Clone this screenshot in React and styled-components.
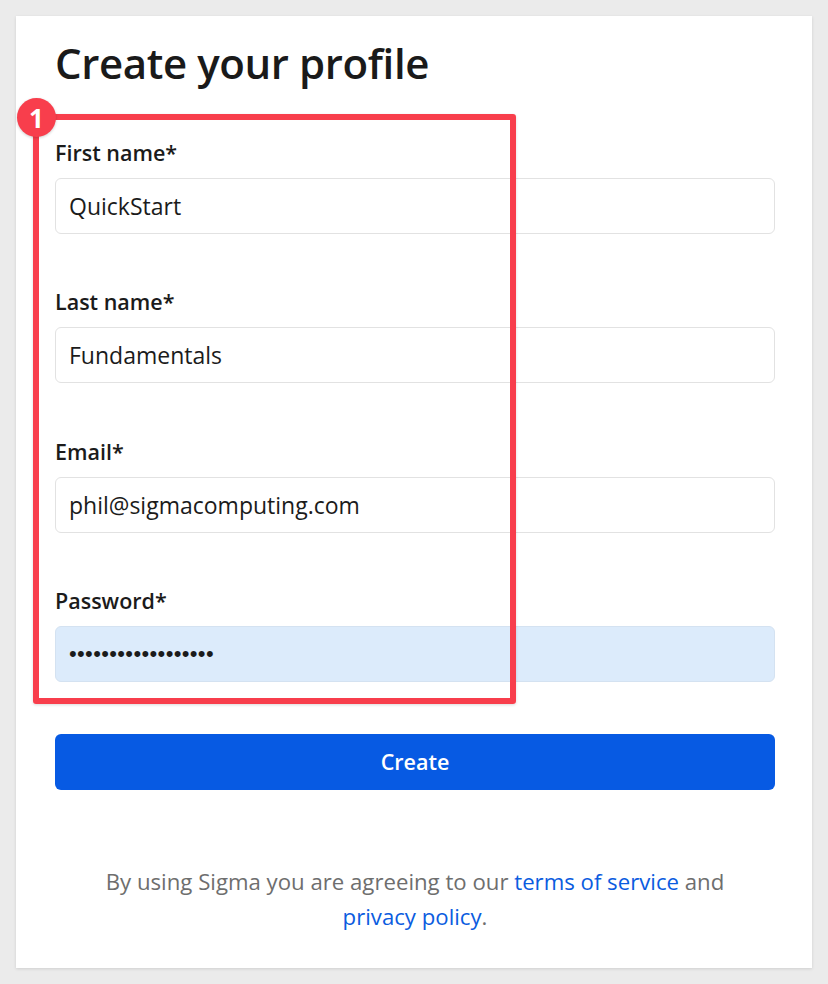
import React from 'react'
import styled, { createGlobalStyle } from 'styled-components'

const GlobalStyle = createGlobalStyle`
  html, body {
    margin: 0;
    background: #ebebeb;
  }
  body {
    font-family: "Open Sans", "Noto Sans", sans-serif;
    color: #1b1b1b;
  }
`

const fields = [
  { label: 'First name*', value: 'QuickStart' },
  { label: 'Last name*', value: 'Fundamentals' },
  { label: 'Email*', value: 'phil@sigmacomputing.com' },
  { label: 'Password*', value: '••••••••••••••••••', secret: true },
]

const App = () => {
  return (
    <>
      <GlobalStyle />
      <Page>
        <Card>
          <Title>Create your profile</Title>
          <Form>
            {fields.map((f) => (
              <Field key={f.label}>
                <Label>{f.label}</Label>
                <Input secret={f.secret}>{f.value}</Input>
              </Field>
            ))}
          </Form>
          <Button>Create</Button>
          <Legal>
            By using Sigma you are agreeing to our <Link>terms of service</Link> and{' '}
            <Link>privacy policy</Link>.
          </Legal>

          <Highlight />
          <Badge>1</Badge>
        </Card>
      </Page>
    </>
  )
}

const Page = styled.div`
  padding: 16px;
`

const Card = styled.div`
  position: relative;
  box-sizing: border-box;
  width: 796px;
  height: 952px;
  background: #fff;
  box-shadow: 0 1px 3px rgba(0, 0, 0, 0.12);
  padding: 21px 37px 0 39px;
`

const Title = styled.h1`
  margin: 0;
  font-size: 42px;
  line-height: 52px;
  font-weight: 600;
  color: #1a1a1a;
  letter-spacing: -0.4px;
`

const Form = styled.div`
  display: flex;
  flex-direction: column;
  gap: 54.4px;
  margin-top: 50px;
`

const Field = styled.div`
  display: flex;
  flex-direction: column;
  gap: 11px;
`

const Label = styled.div`
  font-size: 21.5px;
  line-height: 28px;
  font-weight: 600;
  color: #1b1b1b;
`

const Input = styled.div`
  box-sizing: border-box;
  height: 56px;
  display: flex;
  align-items: center;
  padding: 0 13px;
  border: 1px solid ${({ secret }) => (secret ? '#d4e2f1' : '#e2e2e2')};
  border-radius: 6px;
  background: ${({ secret }) => (secret ? '#dcebfb' : '#fff')};
  font-family: ${({ secret }) => (secret ? '"Liberation Sans", Arial, sans-serif' : 'inherit')};
  font-size: ${({ secret }) => (secret ? '22px' : '23px')};
  letter-spacing: ${({ secret }) => (secret ? '0.35px' : '0')};
  color: #1b1b1b;
`

const Button = styled.button`
  display: block;
  width: 100%;
  height: 56px;
  margin-top: 51.5px;
  border: none;
  border-radius: 6px;
  background: #075ae3;
  color: #fff;
  font-family: inherit;
  font-size: 21.5px;
  font-weight: 600;
`

const Legal = styled.p`
  max-width: 670px;
  margin: 74.5px auto 0;
  text-align: center;
  font-size: 22.2px;
  line-height: 35px;
  color: #6e6e6e;
`

const Link = styled.a`
  color: #0b5ce0;
  text-decoration: none;
`

const Highlight = styled.div`
  position: absolute;
  left: 17px;
  top: 98px;
  width: 483px;
  height: 590px;
  box-sizing: border-box;
  border: 6px solid #f83e4c;
  border-radius: 3px;
  box-shadow: 0 1px 3px rgba(0, 0, 0, 0.15);
`

const Badge = styled.div`
  position: absolute;
  left: 1px;
  top: 82px;
  width: 39px;
  height: 39px;
  border-radius: 50%;
  background: #f83e4c;
  color: #fff;
  display: flex;
  align-items: center;
  justify-content: center;
  font-size: 26px;
  font-weight: 700;
  box-shadow: 0 1px 3px rgba(0, 0, 0, 0.2);
`

export default App
